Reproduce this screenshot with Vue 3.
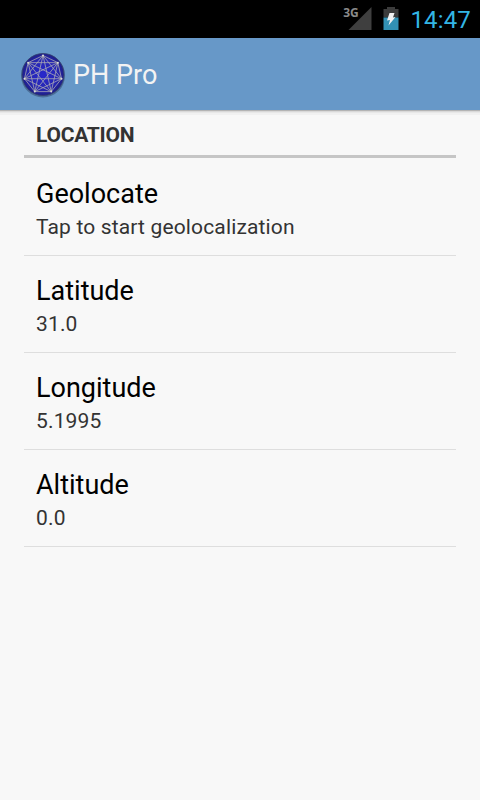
<script setup>
import { ref } from 'vue'

const clock = ref('14:47')

const preferences = [
  { key: 'geolocate', title: 'Geolocate', summary: 'Tap to start geolocalization' },
  { key: 'latitude',  title: 'Latitude',  summary: '31.0' },
  { key: 'longitude', title: 'Longitude', summary: '5.1995' },
  { key: 'altitude',  title: 'Altitude',  summary: '0.0' },
]

// Seven points on a circle, each joined to every other
const POINTS = 7
const RADIUS = 19
const vertices = Array.from({ length: POINTS }, (_, i) => {
  const a = (i / POINTS) * Math.PI * 2 - Math.PI / 2
  return { x: 24 + RADIUS * Math.cos(a), y: 24.5 + RADIUS * Math.sin(a) }
})
const chords = []
for (let i = 0; i < POINTS; i++) {
  for (let j = i + 1; j < POINTS; j++) chords.push({ a: vertices[i], b: vertices[j] })
}
</script>

<template>
  <div class="screen">
    <!-- Status bar -->
    <div class="status-bar">
      <span class="network">3G</span>
      <svg class="signal" width="24" height="24" viewBox="0 0 24 24">
        <path d="M23.500 0v23H.5z" fill="#3f3f3f"/>
      </svg>
      <svg class="battery" width="16" height="24" viewBox="0 0 16 24">
        <path d="M4 0h8v2h3.500v8.500H.5V2H4z" fill="#3c3c3c"/>
        <path d="M.5 10.500h15V23H.5z" fill="#3291b4"/>
        <path d="M6.500 6h5L10 10.500l2.500-.5-7 8.500L7 13l-3 .5z" fill="#f2f2f2"/>
      </svg>
      <span class="clock">{{ clock }}</span>
    </div>

    <!-- Action bar -->
    <header class="action-bar">
      <svg class="logo" width="48" height="48" viewBox="0 0 48 48">
        <defs>
          <radialGradient id="orb" cx="50%" cy="50%" r="52%">
            <stop offset="0" stop-color="#2828cc"/>
            <stop offset=".7" stop-color="#2626b0"/>
            <stop offset="1" stop-color="#1d1d80"/>
          </radialGradient>
        </defs>
        <circle cx="24" cy="25.500" r="22" fill="#203050" opacity=".4"/>
        <circle cx="24" cy="24.500" r="21" fill="url(#orb)" stroke="#34406e" stroke-width=".8"/>
        <line v-for="(c, i) in chords" :key="i" :x1="c.a.x" :y1="c.a.y" :x2="c.b.x" :y2="c.b.y"
          stroke="#a8a8b4" stroke-width=".8"/>
        <circle v-for="(v, i) in vertices" :key="`v${i}`" :cx="v.x" :cy="v.y" r="1" fill="#dcdcd4"/>
      </svg>
      <h1 class="app-title">PH Pro</h1>
    </header>

    <!-- Preference list -->
    <main class="content">
      <h2 class="category">LOCATION</h2>
      <ul class="list">
        <li v-for="p in preferences" :key="p.key" class="item">
          <div class="item-title">{{ p.title }}</div>
          <div class="item-summary">{{ p.summary }}</div>
        </li>
      </ul>
    </main>
  </div>
</template>

<style>
body {
  margin: 0;
  background: #f8f8f8;
}
</style>

<style scoped>
.screen {
  width: 480px;
  height: 800px;
  overflow: hidden;
  background: #f8f8f8;
  font-family: Roboto, sans-serif;
}

/* ── Status bar ── */
.status-bar {
  display: flex;
  align-items: center;
  justify-content: flex-end;
  box-sizing: border-box;
  height: 38px;
  padding-right: 9px;
  background: #000;
}
.network {
  margin: 0 -10px 12px 0;
  color: #8a8a8a;
  font-family: "Open Sans", sans-serif;
  font-size: 12px;
  font-weight: 700;
  line-height: 16px;
  letter-spacing: -0.2px;
}
.signal {
  margin-right: 11px;
}
.battery {
  margin-right: 11px;
}
.clock {
  color: #33b5e5;
  font-size: 24px;
  font-weight: 400;
  line-height: 38px;
  padding-top: 2px;
  letter-spacing: 0.15px;
}

/* ── Action bar ── */
.action-bar {
  position: relative;
  display: flex;
  align-items: center;
  box-sizing: border-box;
  height: 72px;
  padding-left: 19px;
  background: #6798c8;
  box-shadow: 0 1px 0 #b4b4b4, 0 2px 0 #d9d9d9, 0 3px 0 #e8e8e8, 0 5px 0 #f1f1f1;
}
.app-title {
  margin: 2px 0 0 6px;
  color: #f3f3f3;
  font-size: 27px;
  font-weight: 400;
  line-height: 32px;
}

/* ── List ── */
.content {
  padding: 0 24px;
}
.category {
  box-sizing: border-box;
  height: 48px;
  margin: 0;
  padding: 1px 12px 0;
  border-bottom: 3px solid #c6c6c6;
  color: #333;
  font-size: 21px;
  font-weight: 700;
  line-height: 49px;
  letter-spacing: -0.25px;
}
.list {
  margin: 0;
  padding: 1px 0 0;
  list-style: none;
}
.item {
  box-sizing: border-box;
  height: 97px;
  padding: 18px 12px 0;
  border-bottom: 1px solid #dedede;
}
.item-title {
  color: #000;
  font-size: 27px;
  line-height: 34px;
}
.item-summary {
  color: #333;
  font-size: 21px;
  line-height: 32px;
  letter-spacing: 0.15px;
}
</style>
